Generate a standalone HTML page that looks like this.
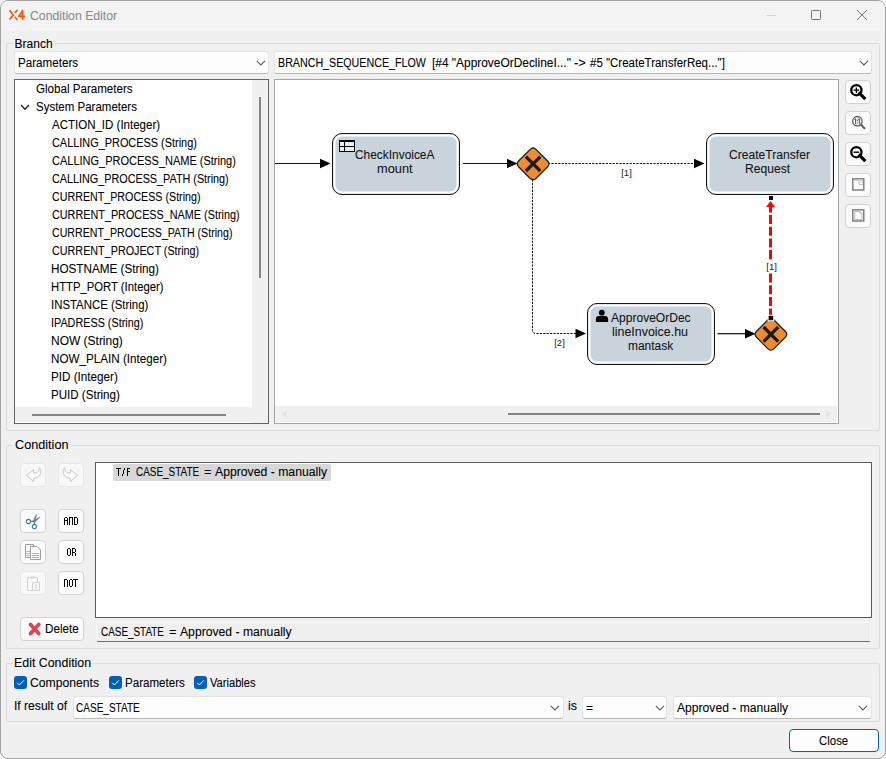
<!DOCTYPE html>
<html><head><meta charset="utf-8">
<style>
*{box-sizing:border-box}
html,body{margin:0;padding:0}
body{width:886px;height:759px;overflow:hidden;background:#f4f4f4;position:relative;font-family:"Liberation Sans",sans-serif;font-size:12px;color:#000}
.a{position:absolute}
#win{left:0;top:0;width:886px;height:759px;background:#f0f0f0;border:1px solid #a4a4a4;border-radius:8px;overflow:hidden}
#title{left:0;top:0;width:884px;height:30px;background:#f3f3f3}
.grp{border:1px solid #dcdcdc;border-radius:2px}
.glab{background:#f0f0f0;height:10px}
.combo{background:#fdfdfd;border:1px solid #e3e3e3;border-bottom-color:#b8b8b8;border-radius:3px}
.t{white-space:pre;line-height:14px;transform-origin:0 0;-webkit-text-stroke:0.08px currentColor}
.btn{background:#fbfbfb;border:1px solid #d2d2d2;border-radius:4px}
.btnd{background:#f8f8f8;border:1px solid #e8e8e8;border-radius:4px}
</style></head><body>
<div id="win" class="a"><div id="title" class="a"></div></div>
<!-- title bar -->
<svg class="a" style="left:0;top:0" width="30" height="30" viewBox="0 0 30 30">
 <path d="M9.6 10.4 L13.3 15 L9.6 19.5" stroke="#fd5a0a" stroke-width="1.9" fill="none" stroke-linejoin="round"/>
 <path d="M14.7 12.9 L17.7 9.9 M14.7 16.7 L17.5 19.8" stroke="#fd5a0a" stroke-width="1.7" fill="none"/>
 <path d="M22.6 19.7 V10.5 L18.6 16.4 H25" stroke="#fd5a0a" stroke-width="1.7" fill="none" stroke-linejoin="round"/>
</svg>
<div class="a" style="left:766px;top:15px;width:10px;height:1px;background:#d4d4d4"></div>
<div class="a" style="left:811px;top:10px;width:10px;height:10px;border:1px solid #747474;border-radius:1.5px"></div>
<svg class="a" style="left:856px;top:9px" width="12" height="12" viewBox="0 0 12 12"><path d="M1 1 L11 11 M11 1 L1 11" stroke="#707070" stroke-width="0.95"/></svg>

<!-- Branch group -->
<div class="a grp" style="left:6px;top:43px;width:874px;height:388px"></div>
<div class="a glab" style="left:13px;top:39px;width:42px"></div>
<div class="a combo" style="left:14px;top:51px;width:255px;height:23px"></div>
<svg class="a" style="left:255.5px;top:60.2px" width="10" height="6" viewBox="0 0 10 6"><path d="M0.8 0.8 L4.9 4.9 L9 0.8" stroke="#5c5c5c" stroke-width="1.1" fill="none"/></svg>

<div class="a combo" style="left:274px;top:51px;width:598px;height:23px"></div>
<svg class="a" style="left:858.5px;top:60.2px" width="10" height="6" viewBox="0 0 10 6"><path d="M0.8 0.8 L4.9 4.9 L9 0.8" stroke="#5c5c5c" stroke-width="1.1" fill="none"/></svg>


<!-- tree -->
<div class="a" style="left:14px;top:79px;width:255px;height:345px;background:#fff;border:1px solid #646464"></div>
<div class="a" style="left:252px;top:80px;width:16px;height:343px;background:#f0f0f0"></div>
<div class="a" style="left:259px;top:97px;width:2px;height:181px;background:#858585"></div>
<div class="a" style="left:15px;top:407px;width:237px;height:15px;background:#f0f0f0"></div>
<div class="a" style="left:32px;top:414px;width:194px;height:2px;background:#858585"></div>
<svg class="a" style="left:20.4px;top:104.4px" width="10" height="7" viewBox="0 0 10 7"><path d="M1 1 L5 5.3 L9 1" stroke="#222" stroke-width="1.3" fill="none"/></svg>

<!-- diagram -->
<div class="a" style="left:274px;top:79px;width:565px;height:345px;background:#fff;border:1px solid #a2a4a8"></div>
<div class="a" style="left:275px;top:406px;width:562px;height:16px;background:#f0f0f0"></div>
<div class="a" style="left:508px;top:413px;width:312px;height:2px;background:#858585"></div>
<svg class="a" style="left:280px;top:409px" width="8" height="10" viewBox="0 0 8 10"><path d="M7 1 L1.5 5 L7 9Z" fill="#e6e6e6"/></svg>
<svg class="a" style="left:825px;top:409px" width="8" height="10" viewBox="0 0 8 10"><path d="M1 1 L6.5 5 L1 9Z" fill="#e6e6e6"/></svg>
<svg class="a" style="left:0;top:0" width="886" height="759" viewBox="0 0 886 759" font-family="Liberation Sans" >
 <defs>
  <clipPath id="dc"><rect x="275" y="80" width="562" height="326"/></clipPath>
 </defs>
 <g clip-path="url(#dc)">
  <!-- edges -->
  <path d="M275 163.5 H321" stroke="#111" stroke-width="1.2"/>
  <path d="M320 158.8 L330.5 163.5 L320 168.2Z" fill="#000"/>
  <path d="M463 163.5 H508" stroke="#111" stroke-width="1.2"/>
  <path d="M507 158.8 L517.5 163.5 L507 168.2Z" fill="#000"/>
  <path d="M548 163.5 H695" stroke="#111" stroke-width="1" stroke-dasharray="2.2 1.2"/>
  <path d="M694 158.8 L704.5 163.5 L694 168.2Z" fill="#000"/>
  <path d="M532.5 179.5 V330 Q532.5 333.5 536 333.5 H576" stroke="#111" stroke-width="1" stroke-dasharray="2.2 1.2" fill="none"/>
  <path d="M575.5 328.8 L586 333.5 L575.5 338.2Z" fill="#000"/>
  <path d="M717.5 333.7 H746" stroke="#111" stroke-width="1.2"/>
  <path d="M745 329 L755.5 333.7 L745 338.4Z" fill="#000"/>
  <path d="M770.5 206.5 V316" stroke="#f00" stroke-width="3" stroke-dasharray="9.1 2.6" stroke-dashoffset="3.2"/>
  <path d="M766 207 L770.5 201 L775 207Z" fill="#f00"/>
  <rect x="769" y="196" width="4" height="4" fill="#000"/>
  
  <rect x="765" y="260" width="12" height="13" fill="#fff"/>
  <text x="626.5" y="176.3" font-size="9.5" text-anchor="middle" fill="#222">[1]</text>
  <text x="559.5" y="346.3" font-size="9.5" text-anchor="middle" fill="#222">[2]</text>
  <text x="771.6" y="270.4" font-size="9.5" text-anchor="middle" fill="#222">[1]</text>
  <!-- nodes -->
  <g fill="#c9d3db" stroke="#141414" stroke-width="1">
   <rect x="332.5" y="133.5" width="127" height="61" rx="9.5"/>
   <rect x="706.5" y="133.5" width="127" height="61" rx="9.5"/>
   <rect x="587.5" y="303.5" width="127" height="61" rx="9.5"/>
  </g>
  <g fill="none" stroke="#fff" stroke-width="2">
   <rect x="334.5" y="135.5" width="123" height="57" rx="7.5"/>
   <rect x="708.5" y="135.5" width="123" height="57" rx="7.5"/>
   <rect x="589.5" y="305.5" width="123" height="57" rx="7.5"/>
  </g>
  <!-- table icon -->
  <g>
   <rect x="339.5" y="140.5" width="15" height="11" fill="#e6edf2" stroke="#000" stroke-width="1"/>
   <rect x="339" y="140" width="16" height="2" fill="#000"/>
   <path d="M339.5 146.5 H354.5 M344.5 141 V151.5" stroke="#000" stroke-width="1"/>
  </g>
  <!-- person icon -->
  <g fill="#050505">
   <circle cx="601.8" cy="312.7" r="2.9"/>
   <path d="M595.9 322 V319.2 Q595.9 316.1 599 316.1 H605 Q608.1 316.1 608.1 319.2 V322Z"/>
  </g>
  
  <!-- gateways -->
  <g fill="#ef8c2e" stroke="#1e1e1e" stroke-width="1.3" stroke-linejoin="round">
   <path d="M529.99 149.61 Q533.10 146.50 536.21 149.61 L547.39 160.79 Q550.50 163.90 547.39 167.01 L536.21 178.19 Q533.10 181.30 529.99 178.19 L518.81 167.01 Q515.70 163.90 518.81 160.79 Z"/>
   <path d="M767.79 320.01 Q770.90 316.90 774.01 320.01 L785.19 331.19 Q788.30 334.30 785.19 337.41 L774.01 348.59 Q770.90 351.70 767.79 348.59 L756.61 337.41 Q753.50 334.30 756.61 331.19 Z"/>
  </g>
  <g stroke="#1a1a1a" stroke-width="3.2">
   <path d="M525.9 156.6 L540.3 171 M540.3 156.6 L525.9 171"/>
   <path d="M763.6 327 L778.2 341.6 M778.2 327 L763.6 341.6"/>
  </g>
  <rect x="768.1" y="315.3" width="5.6" height="5.5" fill="#000" stroke="#fff" stroke-width="1"/>
 </g>
</svg>


<!-- zoom buttons -->
<div class="a btn" style="left:845px;top:80px;width:26px;height:24px"></div>
<div class="a btn" style="left:845px;top:111px;width:26px;height:24px"></div>
<div class="a btn" style="left:845px;top:142px;width:26px;height:24px"></div>
<div class="a btn" style="left:845px;top:173px;width:26px;height:24px"></div>
<div class="a btn" style="left:845px;top:204px;width:26px;height:24px"></div>
<svg class="a" style="left:845px;top:80px" width="26" height="150" viewBox="0 0 26 150">
 <g stroke="#000" fill="none">
  <circle cx="11.4" cy="10.2" r="5.1" stroke-width="2.3"/>
  <path d="M14.8 13.6 L19.2 18" stroke-width="3.2" stroke-linecap="square"/>
  <path d="M8.6 10.2 H14.2 M11.4 7.4 V13" stroke-width="1.3"/>
 </g>
 <g stroke="#5a5a5a" fill="none">
  <circle cx="12.4" cy="41.2" r="4.7" stroke-width="1.3"/>
  <path d="M15.6 44.4 L19.4 48.2" stroke-width="2" stroke-linecap="round"/>
 </g>
 <g stroke="#555" stroke-width="1.1" fill="none">
  <path d="M9.5 39.5 L10.6 38.9 V43.8 M13.2 39.5 L14.3 38.9 V43.8"/>
 </g>
 <rect x="11.9" y="40" width="0.9" height="0.9" fill="#555"/>
 <rect x="11.9" y="42.6" width="0.9" height="0.9" fill="#555"/>
 <g stroke="#000" fill="none">
  <circle cx="11.4" cy="72.2" r="5.1" stroke-width="2.3"/>
  <path d="M14.8 75.6 L19.2 80" stroke-width="3.2" stroke-linecap="square"/>
  <path d="M8.6 72.2 H14.2" stroke-width="1.4"/>
 </g>
 <!-- icon 4 -->
 <rect x="7.8" y="98.8" width="11" height="11.2" fill="#fff" stroke="#7a7a7a" stroke-width="1.4"/>
 <path d="M9 100.3 H14 V104.5 H18" stroke="#bdbdbd" stroke-width="0.9" fill="none"/>
 <path d="M14 100 L18 104 V100Z" fill="#d8d8d8"/>
 <!-- icon 5 -->
 <rect x="7.8" y="129.8" width="11" height="11.2" fill="#fff" stroke="#7a7a7a" stroke-width="1.4"/>
 <path d="M9.8 139.5 V131.3 H15 L17 133.3 V139.5 Z" fill="none" stroke="#b0b0b0" stroke-width="0.9"/>
 <path d="M15 131.3 V133.5 H17" stroke="#c8c8c8" stroke-width="0.9" fill="#e0e0e0"/>
</svg>


<!-- Condition group -->
<div class="a grp" style="left:6px;top:445px;width:874px;height:204px"></div>
<div class="a glab" style="left:13px;top:440px;width:58px"></div>
<div class="a btnd" style="left:20px;top:463px;width:26px;height:24px"></div>
<div class="a btnd" style="left:58px;top:463px;width:26px;height:24px"></div>
<div class="a btn" style="left:20px;top:509px;width:26px;height:24px"></div>
<div class="a btn" style="left:58px;top:509px;width:26px;height:24px"></div>
<div class="a btn" style="left:20px;top:540px;width:26px;height:24px"></div>
<div class="a btn" style="left:58px;top:540px;width:26px;height:24px"></div>
<div class="a btnd" style="left:20px;top:571px;width:26px;height:24px"></div>
<div class="a btn" style="left:58px;top:571px;width:26px;height:24px"></div>
<div class="a btn" style="left:20px;top:617px;width:64px;height:24px"></div>
<svg class="a" style="left:0;top:440px" width="95" height="210" viewBox="0 440 95 210">
 <!-- undo -->
 <path d="M26.5 475.5 L33.5 469.5 L33.5 472.5 Q35.5 474 37.5 472 Q39.5 470 39.5 467.5 Q41.5 470.5 40.5 474 Q39 478 33.5 478.5 L33.5 481.5 Z" fill="none" stroke="#cacaca" stroke-width="1"/>
 <!-- redo -->
 <path d="M77.5 475.5 L70.5 469.5 L70.5 472.5 Q68.5 474 66.5 472 Q64.5 470 64.5 467.5 Q62.5 470.5 63.5 474 Q65 478 70.5 478.5 L70.5 481.5 Z" fill="none" stroke="#cacaca" stroke-width="1"/>
 <!-- scissors -->
 <path d="M33.1 521 L35.7 514.8 Q36.5 513.9 36.9 514.8 L35.2 521.6 Z" fill="#6a7f96"/>
 <path d="M33.8 520.6 L38.9 516.9 Q39.9 516.6 39.7 517.7 L35.2 522.2 Z" fill="#6a7f96"/>
 <path d="M30.4 521.4 L34.4 521 L34.5 524.4" stroke="#6a7f96" stroke-width="1.3" fill="none"/>
 <circle cx="28.4" cy="521.5" r="2.1" fill="#fff" stroke="#3a78c0" stroke-width="1.1"/>
 <circle cx="34.4" cy="526.5" r="2.1" fill="#fff" stroke="#3a78c0" stroke-width="1.1"/>
 <!-- copy -->
 <path d="M33.5 546 V544.5 H25.5 V557.5 H30.5" fill="none" stroke="#a0a0a0" stroke-width="1"/>
 <path d="M26.5 551.5 H30 M26.5 553.5 H30 M26.5 555.5 H30" stroke="#b0b0b0" stroke-width="0.9"/>
 <path d="M30.5 546.5 H37 L40.5 550 V559.5 H30.5 Z" fill="#fdfdfd" stroke="#a0a0a0" stroke-width="1"/>
 <path d="M32 553.5 H39 M32 555.5 H39 M32 557.5 H39" stroke="#a8a8a8" stroke-width="0.9"/>
 <!-- paste -->
 <path d="M27.5 577.5 H37.5 V590.5 H27.5 Z" fill="none" stroke="#d2d2d2" stroke-width="1"/>
 <path d="M30.5 576.5 H34.5 V578.5 H30.5Z" fill="#d2d2d2"/>
 <path d="M32.5 582.5 H39.5 V590.5 H32.5Z" fill="#f5f5f5" stroke="#d2d2d2" stroke-width="1"/>
 <path d="M35 585.5 H37 M35 587.5 H37" stroke="#d2d2d2" stroke-width="0.9"/>
 <!-- AND/OR/NOT -->
 <g fill="#000" shape-rendering="crispEdges"><rect x="65" y="517" width="2" height="1"/><rect x="64" y="518" width="1" height="7"/><rect x="67" y="518" width="1" height="7"/><rect x="65" y="520" width="2" height="1"/><rect x="69" y="517" width="4" height="1"/><rect x="69" y="518" width="1" height="7"/><rect x="72" y="518" width="1" height="7"/><rect x="74" y="517" width="3" height="1"/><rect x="74" y="518" width="1" height="7"/><rect x="77" y="518" width="1" height="6"/><rect x="75" y="524" width="2" height="1"/><rect x="68" y="548" width="2" height="1"/><rect x="67" y="549" width="1" height="6"/><rect x="70" y="549" width="1" height="6"/><rect x="68" y="555" width="2" height="1"/><rect x="72" y="548" width="1" height="8"/><rect x="73" y="548" width="2" height="1"/><rect x="75" y="549" width="1" height="3"/><rect x="73" y="552" width="2" height="1"/><rect x="75" y="553" width="1" height="3"/><rect x="64" y="579" width="3" height="1"/><rect x="64" y="580" width="1" height="7"/><rect x="67" y="580" width="1" height="7"/><rect x="70" y="579" width="2" height="1"/><rect x="69" y="580" width="1" height="6"/><rect x="72" y="580" width="1" height="6"/><rect x="70" y="586" width="2" height="1"/><rect x="73" y="579" width="5" height="1"/><rect x="75" y="580" width="1" height="7"/></g>
 <!-- delete x -->
 <path d="M30.5 624.5 L38.7 633.5 M38.7 624.5 L30.5 633.5" stroke="#e1434d" stroke-width="3.8" stroke-linecap="round"/>
</svg>
<div class="a" style="left:95px;top:462px;width:777px;height:156px;background:#fff;border:1px solid #5a5a5a"></div>
<div class="a" style="left:113px;top:464px;width:218px;height:17px;background:#d7d7d7;border-radius:2px"></div>
<svg class="a" style="left:0;top:0" width="140" height="490" viewBox="0 0 140 490"><g fill="#000" shape-rendering="crispEdges"><rect x="116" y="468" width="5" height="1"/><rect x="118" y="469" width="1" height="7"/><rect x="124" y="468" width="1" height="2"/><rect x="123" y="470" width="1" height="4"/><rect x="122" y="474" width="1" height="2"/><rect x="127" y="468" width="1" height="8"/><rect x="128" y="468" width="2" height="1"/><rect x="128" y="471" width="2" height="1"/></g></svg>
<div class="a" style="left:96px;top:622px;width:775px;height:20px;background:#efefef;border:1px solid #f8f8f8;border-bottom-color:#707070;border-radius:2px"></div>

<!-- Edit Condition group -->
<div class="a grp" style="left:6px;top:663px;width:874px;height:59px"></div>
<div class="a glab" style="left:13px;top:658px;width:81px"></div>
<div class="a" style="left:14px;top:676px;width:13px;height:13px;background:#005fb8;border-radius:3px"></div><svg class="a" style="left:14px;top:676px" width="13" height="13" viewBox="0 0 13 13"><path d="M3.2 6.8 L5.4 9 L9.8 4.4" stroke="#fff" stroke-width="1" fill="none"/></svg>
<div class="a" style="left:109px;top:676px;width:13px;height:13px;background:#005fb8;border-radius:3px"></div><svg class="a" style="left:109px;top:676px" width="13" height="13" viewBox="0 0 13 13"><path d="M3.2 6.8 L5.4 9 L9.8 4.4" stroke="#fff" stroke-width="1" fill="none"/></svg>
<div class="a" style="left:194px;top:676px;width:13px;height:13px;background:#005fb8;border-radius:3px"></div><svg class="a" style="left:194px;top:676px" width="13" height="13" viewBox="0 0 13 13"><path d="M3.2 6.8 L5.4 9 L9.8 4.4" stroke="#fff" stroke-width="1" fill="none"/></svg>

<div class="a combo" style="left:73px;top:696px;width:491px;height:23px"></div>
<svg class="a" style="left:550.3px;top:704.8px" width="10" height="6" viewBox="0 0 10 6"><path d="M0.8 0.8 L4.9 4.9 L9 0.8" stroke="#5c5c5c" stroke-width="1.1" fill="none"/></svg>

<div class="a combo" style="left:582px;top:696px;width:85px;height:23px"></div>
<svg class="a" style="left:654.5px;top:704.8px" width="10" height="6" viewBox="0 0 10 6"><path d="M0.8 0.8 L4.9 4.9 L9 0.8" stroke="#5c5c5c" stroke-width="1.1" fill="none"/></svg>

<div class="a combo" style="left:673px;top:696px;width:199px;height:23px"></div>
<svg class="a" style="left:857.8px;top:704.8px" width="10" height="6" viewBox="0 0 10 6"><path d="M0.8 0.8 L4.9 4.9 L9 0.8" stroke="#5c5c5c" stroke-width="1.1" fill="none"/></svg>

<div class="a" style="left:789px;top:729px;width:90px;height:23px;background:#fdfdfd;border:1.5px solid #0067c0;border-radius:4px"></div>

<!-- texts -->
<div class="a t" style="left:30.38px;top:9px;font-size:12px;transform:scaleX(1.0204);color:#8a8a8a">Condition Editor</div>
<div class="a t" style="left:14.62px;top:37px;font-size:12px">Branch</div>
<div class="a t" style="left:17.55px;top:56px;font-size:12px;transform:scaleX(0.9686)">Parameters</div>
<div class="a t" style="left:277.92px;top:56px;font-size:12px;transform:scaleX(0.8903)">BRANCH_SEQUENCE_FLOW</div>
<div class="a t" style="left:432.15px;top:56px;font-size:12px;transform:scaleX(0.9924)">[#4 "ApproveOrDeclineI..."</div>
<div class="a t" style="left:573.82px;top:56px;font-size:12px;transform:scaleX(1.0825)">-&gt;</div>
<div class="a t" style="left:589.65px;top:56px;font-size:12px;transform:scaleX(0.9577)">#5 "CreateTransferReq..."]</div>
<div class="a t" style="left:35.62px;top:82px;font-size:12px;transform:scaleX(0.9656)">Global Parameters</div>
<div class="a t" style="left:35.68px;top:100px;font-size:12px;transform:scaleX(0.9580)">System Parameters</div>
<div class="a t" style="left:52.28px;top:118px;font-size:12px;transform:scaleX(0.9587)">ACTION_ID (Integer)</div>
<div class="a t" style="left:51.75px;top:136px;font-size:12px;transform:scaleX(0.9087)">CALLING_PROCESS (String)</div>
<div class="a t" style="left:51.74px;top:154px;font-size:12px;transform:scaleX(0.9159)">CALLING_PROCESS_NAME (String)</div>
<div class="a t" style="left:51.75px;top:172px;font-size:12px;transform:scaleX(0.9003)">CALLING_PROCESS_PATH (String)</div>
<div class="a t" style="left:51.76px;top:190px;font-size:12px;transform:scaleX(0.8909)">CURRENT_PROCESS (String)</div>
<div class="a t" style="left:51.75px;top:208px;font-size:12px;transform:scaleX(0.9014)">CURRENT_PROCESS_NAME (String)</div>
<div class="a t" style="left:51.76px;top:226px;font-size:12px;transform:scaleX(0.8862)">CURRENT_PROCESS_PATH (String)</div>
<div class="a t" style="left:51.75px;top:244px;font-size:12px;transform:scaleX(0.8982)">CURRENT_PROJECT (String)</div>
<div class="a t" style="left:51.34px;top:262px;font-size:12px;transform:scaleX(0.9757)">HOSTNAME (String)</div>
<div class="a t" style="left:51.37px;top:280px;font-size:12px;transform:scaleX(0.9409)">HTTP_PORT (Integer)</div>
<div class="a t" style="left:51.25px;top:298px;font-size:12px;transform:scaleX(0.9498)">INSTANCE (String)</div>
<div class="a t" style="left:51.30px;top:316px;font-size:12px;transform:scaleX(0.9004)">IPADRESS (String)</div>
<div class="a t" style="left:51.32px;top:334px;font-size:12px;transform:scaleX(0.9976)">NOW (String)</div>
<div class="a t" style="left:51.34px;top:352px;font-size:12px;transform:scaleX(0.9716)">NOW_PLAIN (Integer)</div>
<div class="a t" style="left:51.34px;top:370px;font-size:12px;transform:scaleX(0.9722)">PID (Integer)</div>
<div class="a t" style="left:51.35px;top:388px;font-size:12px;transform:scaleX(0.9639)">PUID (String)</div>
<div class="a t" style="left:14.96px;top:438px;font-size:12px;transform:scaleX(1.0545)">Condition</div>
<div class="a t" style="left:136.30px;top:465px;font-size:12px;transform:scaleX(0.8284)">CASE_STATE</div>
<div class="a t" style="left:203.88px;top:465px;font-size:12px;transform:scaleX(1.0635)">=</div>
<div class="a t" style="left:214.88px;top:465px;font-size:12px;transform:scaleX(1.0181)">Approved - manually</div>
<div class="a t" style="left:45.44px;top:622px;font-size:12px;transform:scaleX(0.9768)">Delete</div>
<div class="a t" style="left:101.40px;top:625px;font-size:12px;transform:scaleX(0.8258)">CASE_STATE</div>
<div class="a t" style="left:168.78px;top:625px;font-size:12px;transform:scaleX(1.0635)">=</div>
<div class="a t" style="left:180.08px;top:625px;font-size:12px;transform:scaleX(1.0145)">Approved - manually</div>
<div class="a t" style="left:14.38px;top:656px;font-size:12px;transform:scaleX(1.0322)">Edit Condition</div>
<div class="a t" style="left:30.28px;top:676px;font-size:12px;transform:scaleX(1.0150)">Components</div>
<div class="a t" style="left:124.55px;top:676px;font-size:12px;transform:scaleX(0.9636)">Parameters</div>
<div class="a t" style="left:209.95px;top:676px;font-size:12px;transform:scaleX(0.9265)">Variables</div>
<div class="a t" style="left:13.58px;top:699px;font-size:12px;transform:scaleX(1.0078)">If result of</div>
<div class="a t" style="left:75.89px;top:701px;font-size:12px;transform:scaleX(0.8362)">CASE_STATE</div>
<div class="a t" style="left:568.47px;top:699px;font-size:12px;transform:scaleX(1.0364)">is</div>
<div class="a t" style="left:586.01px;top:701px;font-size:12px">=</div>
<div class="a t" style="left:677.38px;top:701px;font-size:12px;transform:scaleX(1.0099)">Approved - manually</div>
<div class="a t" style="left:819.12px;top:734px;font-size:12px;transform:scaleX(0.9513)">Close</div>
<div class="a t" style="left:355.40px;top:148px;font-size:12px;transform:scaleX(0.9924);color:#141414">CheckInvoiceA</div>
<div class="a t" style="left:377.05px;top:162px;font-size:12px;transform:scaleX(1.0657);color:#141414">mount</div>
<div class="a t" style="left:729.29px;top:148px;font-size:12px;transform:scaleX(1.0089);color:#141414">CreateTransfer</div>
<div class="a t" style="left:744.51px;top:162px;font-size:12px;transform:scaleX(1.0086);color:#141414">Request</div>
<div class="a t" style="left:610.88px;top:311px;font-size:12px;transform:scaleX(1.0035);color:#141414">ApproveOrDec</div>
<div class="a t" style="left:612.46px;top:325px;font-size:12px;transform:scaleX(1.0351);color:#141414">lineInvoice.hu</div>
<div class="a t" style="left:628.01px;top:339px;font-size:12px;transform:scaleX(0.9961);color:#141414">mantask</div>


</body></html>
